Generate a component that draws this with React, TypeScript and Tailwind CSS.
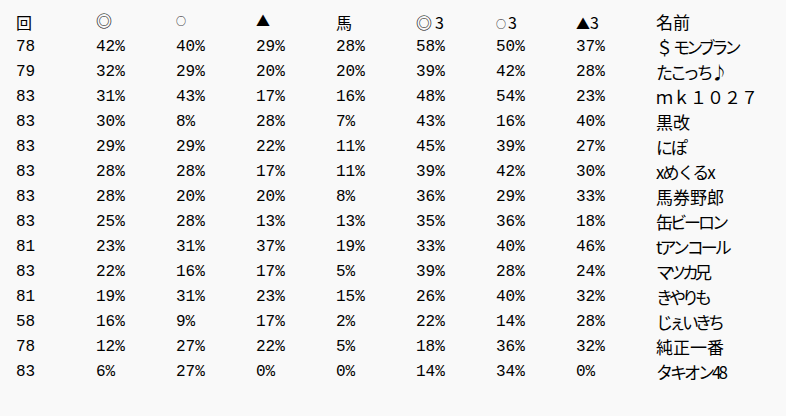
import React from 'react';

type Row = { cells: string[]; name: string; track: string };

const rows: Row[] = [
  { cells: ['78', '42%', '40%', '29%', '28%', '58%', '50%', '37%'], name: '＄モンブラン', track: 'tracking-[-4px]' },
  { cells: ['79', '32%', '29%', '20%', '20%', '39%', '42%', '28%'], name: 'たこっち♪', track: 'tracking-[-3px]' },
  { cells: ['83', '31%', '43%', '17%', '16%', '48%', '54%', '23%'], name: 'ｍｋ１０２７', track: '' },
  { cells: ['83', '30%', '8%', '28%', '7%', '43%', '16%', '40%'], name: '黒改', track: '' },
  { cells: ['83', '29%', '29%', '22%', '11%', '45%', '39%', '27%'], name: 'にぽ', track: 'tracking-[-2px]' },
  { cells: ['83', '28%', '28%', '17%', '11%', '39%', '42%', '30%'], name: 'xめくるx', track: 'tracking-[-2px]' },
  { cells: ['83', '28%', '20%', '20%', '8%', '36%', '29%', '33%'], name: '馬券野郎', track: '' },
  { cells: ['83', '25%', '28%', '13%', '13%', '35%', '36%', '18%'], name: '缶ビーロン', track: 'tracking-[-3px]' },
  { cells: ['81', '23%', '31%', '37%', '19%', '33%', '40%', '46%'], name: 'tアンコール', track: 'tracking-[-3px]' },
  { cells: ['83', '22%', '16%', '17%', '5%', '39%', '28%', '24%'], name: 'マツカ兄', track: 'tracking-[-4px]' },
  { cells: ['81', '19%', '31%', '23%', '15%', '26%', '40%', '32%'], name: 'きやりも', track: 'tracking-[-4px]' },
  { cells: ['58', '16%', '9%', '17%', '2%', '22%', '14%', '28%'], name: 'じぇいきち', track: 'tracking-[-4px]' },
  { cells: ['78', '12%', '27%', '22%', '5%', '18%', '36%', '32%'], name: '純正一番', track: '' },
  { cells: ['83', '6%', '27%', '0%', '0%', '14%', '34%', '0%'], name: 'タキオン48', track: 'tracking-[-3px]' },
];

const cjk = "[font-family:'Noto_Sans_CJK_JP',sans-serif]";

const Circle = () => (
  <span className={`inline-block w-[12px] align-middle text-[10px] leading-none ${cjk}`}>○</span>
);
const Tri = () => <span className={`inline-block w-[14px] text-[14px] ${cjk}`}>▲</span>;
const Dbl = () => <span className={`inline-block w-[19px] ${cjk}`}>◎</span>;

const jp = `whitespace-nowrap text-[17px] ${cjk}`;

function Name({ row }: { row: Row }) {
  if (row.name.startsWith('＄')) {
    return (
      <div className={jp}>
        ＄<span className={row.track}>{row.name.slice(1)}</span>
      </div>
    );
  }
  return <div className={`${jp} ${row.track}`}>{row.name}</div>;
}

export default function App() {
  return (
    <div className="min-h-[416px] w-full bg-[#f9f9f9] pl-4 pt-[9px] text-[16px] text-black [font-family:'Liberation_Mono','Noto_Sans_CJK_JP',monospace]">
      <div className="grid grid-cols-[repeat(9,80px)] auto-rows-[25px] items-center">
        <div className={cjk}>回</div>
        <div><Dbl /></div>
        <div><Circle /></div>
        <div><Tri /></div>
        <div className={cjk}>馬</div>
        <div className={cjk}><Dbl />3</div>
        <div className={cjk}><Circle />3</div>
        <div className={cjk}><Tri />3</div>
        <div className={jp}>名前</div>
        {rows.map((r, i) => (
          <React.Fragment key={i}>
            {r.cells.map((c, j) => (
              <div key={j}>{c}</div>
            ))}
            <Name row={r} />
          </React.Fragment>
        ))}
      </div>
    </div>
  );
}
